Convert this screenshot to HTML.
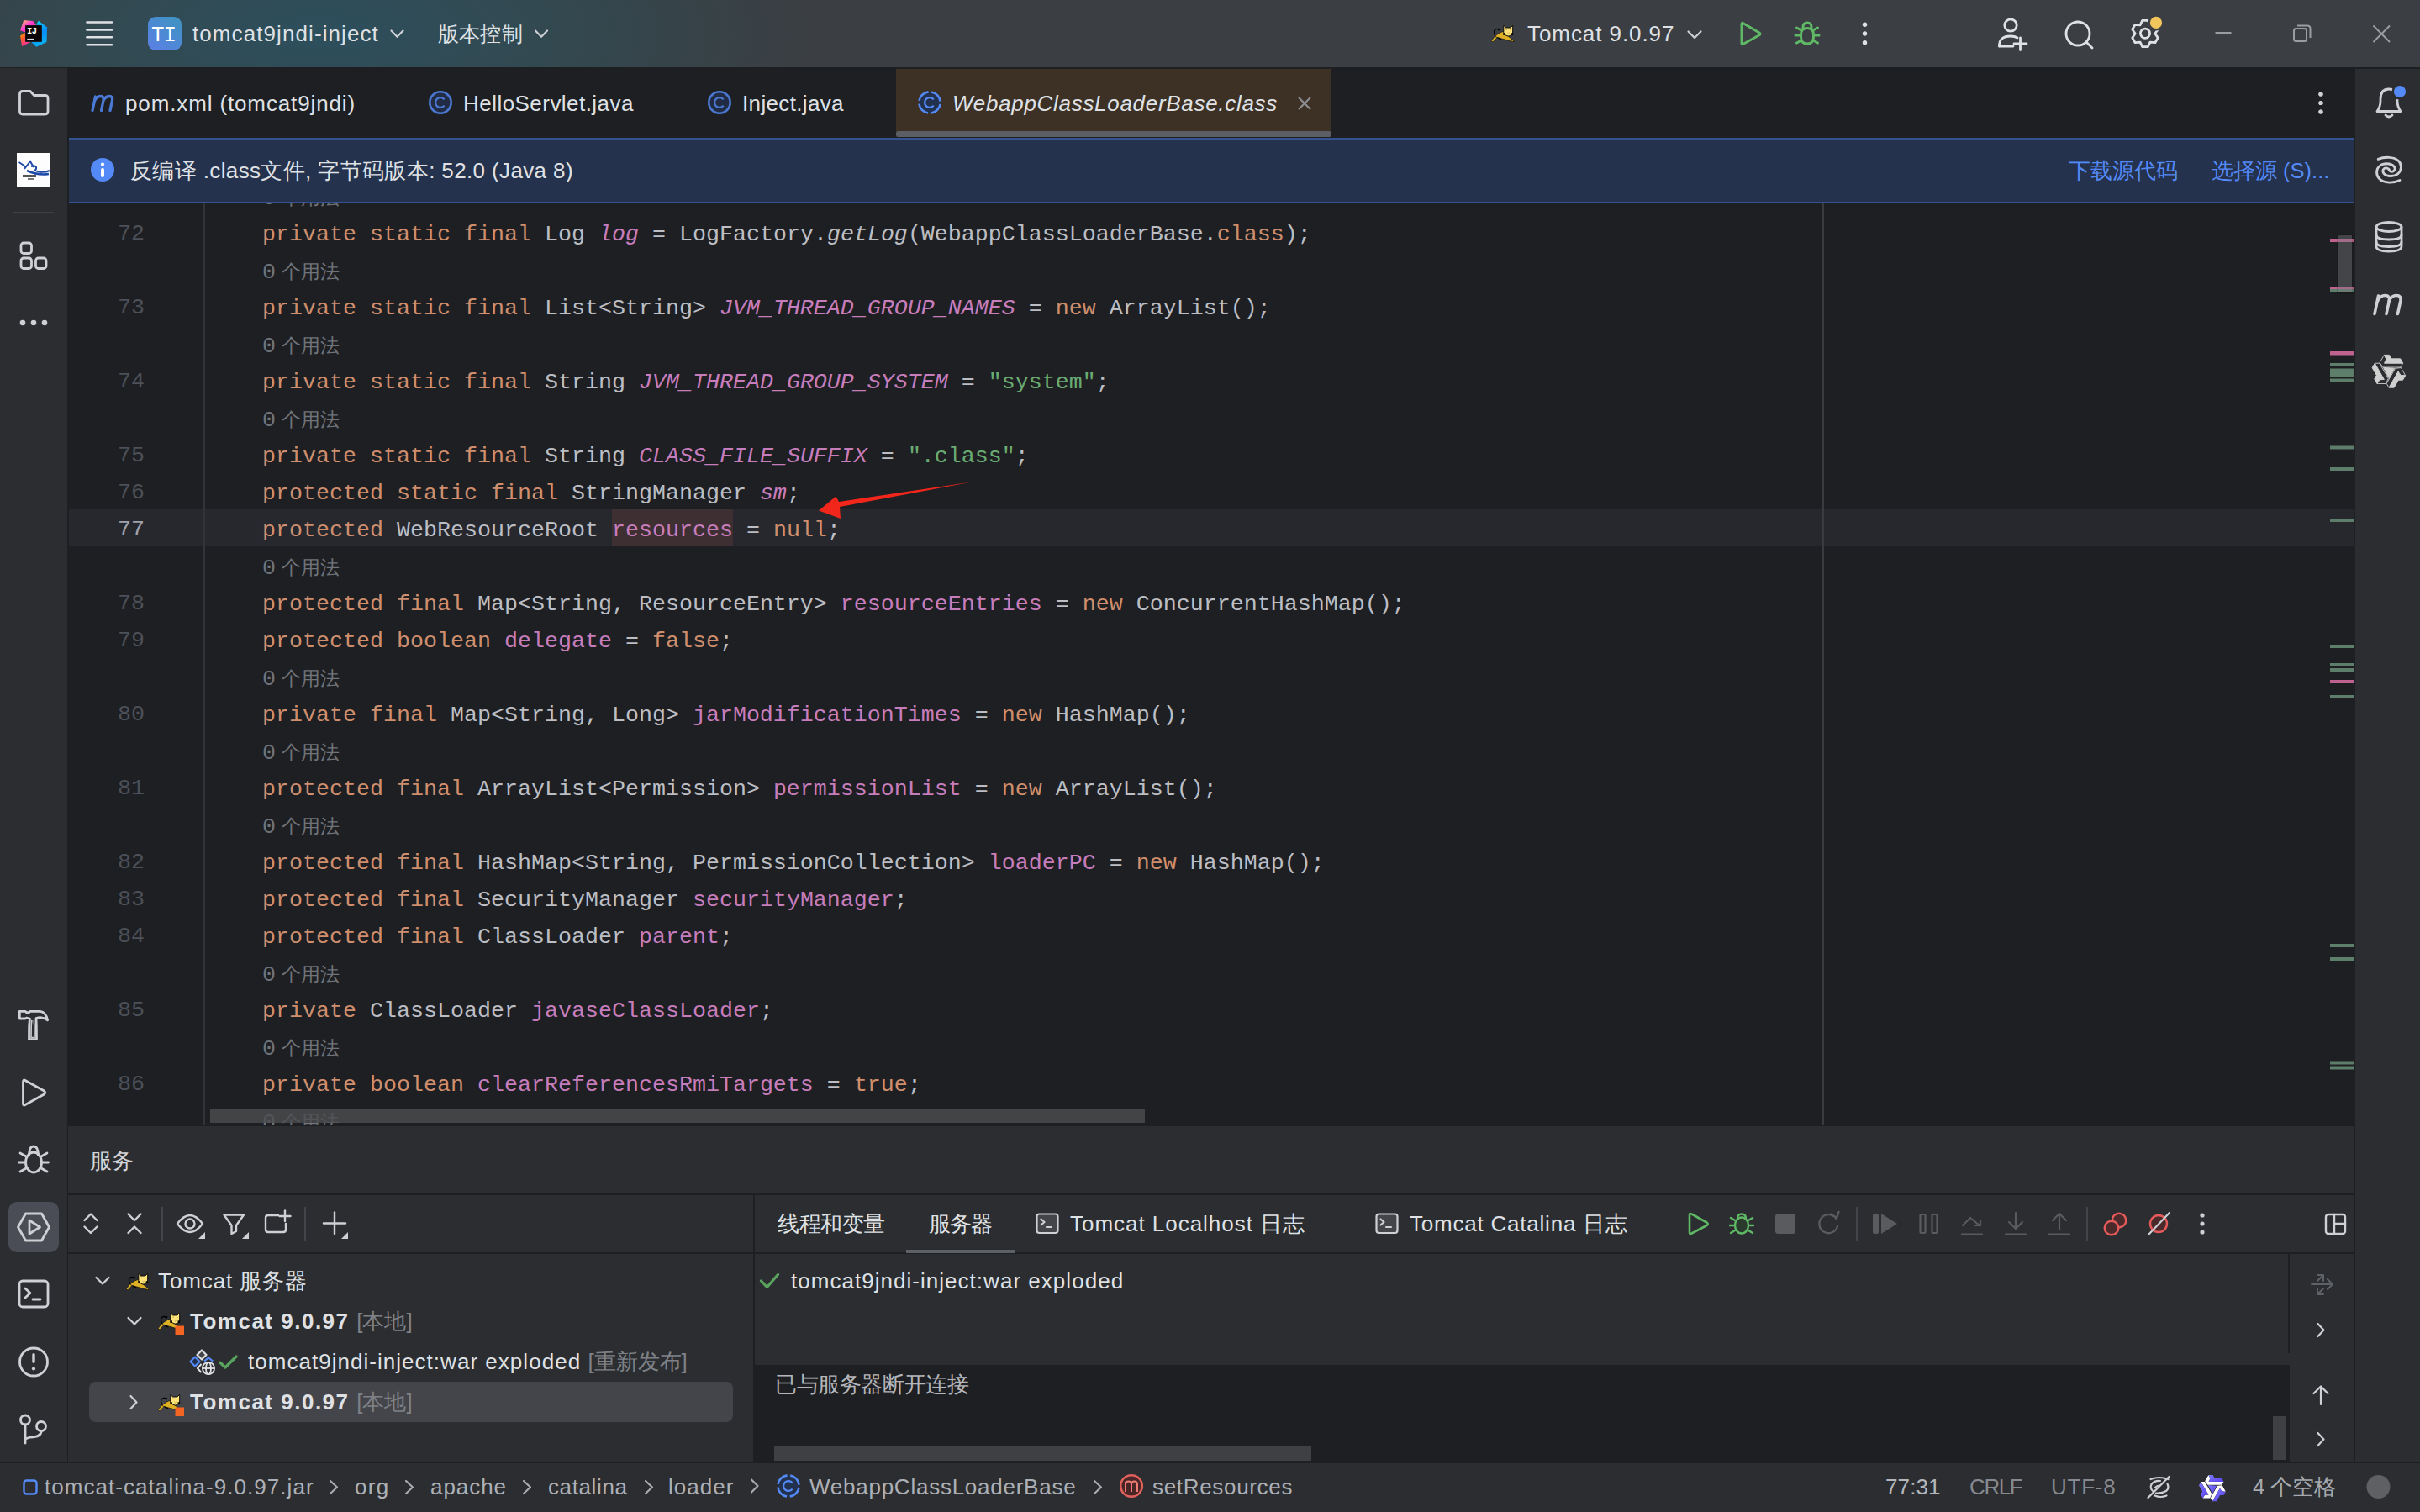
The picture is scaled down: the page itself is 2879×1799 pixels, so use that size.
<!DOCTYPE html>
<html><head><meta charset="utf-8">
<style>
*{box-sizing:border-box;margin:0;padding:0}
html,body{width:2879px;height:1799px;overflow:hidden;background:#1e1f22}
body{position:relative;font-family:"Liberation Sans",sans-serif;color:#dfe1e5}
.a{position:absolute}
.t{position:absolute;white-space:nowrap;font-size:26px;line-height:30px}
svg{position:absolute;overflow:visible}
#title{left:0;top:0;width:2879px;height:80px;background:radial-gradient(ellipse 600px 230px at 380px 40px,#2d4f5d 0%,#33484f 50%,#3b3e42 100%)}
#lstrip{left:0;top:81px;width:80px;height:1659px;background:#2b2d30}
#rstrip{left:2800px;top:82px;width:79px;height:1658px;background:#2b2d30;border-left:2px solid #1e1f22}
#tabbar{left:80px;top:80px;width:2721px;height:84px;background:#1e1f22}
#banner{left:82px;top:164px;width:2718px;height:78px;background:#25324d;border-top:2px solid #35538f;border-bottom:2px solid #35538f}
#editor{left:80px;top:241px;width:2721px;height:1098px;background:#1e1f22;overflow:hidden}
#services{left:80px;top:1338px;width:2721px;height:402px;background:#2b2d30;border-top:2px solid #1e1f22;border-left:1px solid #1e1f22}
#status{left:0;top:1740px;width:2879px;height:59px;background:#2b2d30;border-top:1px solid #1e1f22}
.code{position:absolute;left:232px;margin-top:3px;white-space:pre;font-family:"Liberation Mono",monospace;font-size:26.67px;line-height:44px;height:44px;color:#bcbec4}
.ln{position:absolute;left:0;width:92px;margin-top:2px;text-align:right;font-family:"Liberation Mono",monospace;font-size:26.67px;line-height:44px;color:#4b5059}
.k{color:#cf8e6d}.f{color:#c77dbb}.s{color:#6aab73}.i{font-style:italic}
.inl{position:absolute;left:232px;margin-top:3px;white-space:pre;font-family:"Liberation Mono",monospace;font-size:26.67px;line-height:44px;color:#6f737a}
.inl b{font-weight:normal;font-family:"Liberation Sans",sans-serif;font-size:23px;margin-left:7px}
</style></head><body>

<svg width="0" height="0" style="position:absolute"><defs>
<symbol id="tc" viewBox="0 0 40 34">
 <path d="M10.8,21 C9,17 9,13.5 12,12.6 C13.5,12.1 15,12.6 16.5,13.4" fill="none" stroke="#000" stroke-width="1.3"/>
 <ellipse cx="15.6" cy="13.3" rx="1.9" ry="1.1" fill="#000"/>
 <path d="M11.2,20.2 L6.2,26.6 L8,27.8 L13,22.6 Z" fill="#e2b325" stroke="#111" stroke-width="0.6"/>
 <path d="M10.8,21.2 C14,18 17,16.2 21,15.4 L24.5,20 C27.5,22 30.5,24 33.6,27.6 C28,26.8 22,24.8 17,23.6 C14.5,23 12.5,22.6 10.8,21.2 Z" fill="#ddb025" stroke="#1a1408" stroke-width="0.7"/>
 <path d="M12.6,22.4 L17,25.6 L18.4,24.6 L14.8,22.4 Z" fill="#000"/>
 <path d="M20.8,8.3 L23.6,11 L28.8,11 L31.7,8.3 L31.6,17.2 C31,19.2 28.5,21 26.6,21 C24.6,21 21.6,19.2 20.8,17.2 Z" fill="#fde27a" stroke="#000" stroke-width="0.9"/>
 <rect x="20.3" y="17.3" width="2.6" height="2.6" fill="#000"/><rect x="29.6" y="17.3" width="2.6" height="2.6" fill="#000"/>
 <path d="M23.5,13.5 L25,13 M28,13 L29.5,13.5 M25.5,17 L26.6,18 L27.7,17" fill="none" stroke="#8a7a30" stroke-width="0.6"/>
</symbol>
<symbol id="ty" viewBox="0 0 52 54"><path d="M20.36,8.39 L26.61,8.39 L29.29,12.86 L39.64,12.86 L42.68,18.21 L20.54,18.21 L22.86,13.39 Z"/><path d="M45.62,32.73 L42.50,38.15 L37.29,38.23 L32.12,47.20 L25.96,47.15 L37.03,27.98 L40.04,32.40 Z"/><path d="M11.91,42.45 L8.79,37.03 L11.31,32.48 L6.13,23.51 L9.26,18.20 L20.33,37.38 L14.99,37.78 Z"/><path d="M19.46,23.39 L32.50,24.29 L26.07,35.71 Z"/><g fill="none" stroke-width="0.9" style="stroke:inherit"><path d="M20.36,8.39 L15.00,17.50 L19.11,23.04 L39.82,23.04 L42.68,18.21"/><path d="M45.62,32.73 L40.42,23.54 L33.57,24.33 L23.21,42.27 L25.96,47.15"/><path d="M11.91,42.45 L22.48,42.53 L25.22,36.21 L14.86,18.27 L9.26,18.20"/></g></symbol>
<symbol id="ty2" viewBox="0 0 52 54"><path d="M20.36,8.39 L15.00,17.50 L19.11,23.04 L39.82,23.04 L42.68,18.21 L20.54,18.21 L22.86,13.39 Z" fill="#fff"/><path d="M45.62,32.73 L40.42,23.54 L33.57,24.33 L23.21,42.27 L25.96,47.15 L37.03,27.98 L40.04,32.40 Z" fill="#fff"/><path d="M11.91,42.45 L22.48,42.53 L25.22,36.21 L14.86,18.27 L9.26,18.20 L20.33,37.38 L14.99,37.78 Z" fill="#fff"/><path d="M20.36,8.39 L26.61,8.39 L29.29,12.86 L39.64,12.86 L42.68,18.21 L20.54,18.21 L22.86,13.39 Z"/><path d="M45.62,32.73 L42.50,38.15 L37.29,38.23 L32.12,47.20 L25.96,47.15 L37.03,27.98 L40.04,32.40 Z"/><path d="M11.91,42.45 L8.79,37.03 L11.31,32.48 L6.13,23.51 L9.26,18.20 L20.33,37.38 L14.99,37.78 Z"/><path d="M19.46,23.39 L32.50,24.29 L26.07,35.71 Z"/></symbol></defs></svg>
<div id="title" class="a"></div>

<svg style="left:0;top:0" width="80" height="80" viewBox="0 0 80 80">
 <defs>
  <linearGradient id="ija" x1="0" y1="0" x2="1" y2="1"><stop offset="0" stop-color="#fcd34a"/><stop offset="0.45" stop-color="#ff3ad6"/><stop offset="1" stop-color="#ff2a5a"/></linearGradient>
  <linearGradient id="ijb" x1="0" y1="0" x2="0.6" y2="1"><stop offset="0" stop-color="#ffb000"/><stop offset="0.4" stop-color="#ff5a2a"/><stop offset="1" stop-color="#ff2ab4"/></linearGradient>
  <linearGradient id="ijc" x1="0.3" y1="0" x2="0.6" y2="1"><stop offset="0" stop-color="#08d6f5"/><stop offset="0.5" stop-color="#0a8cf8"/><stop offset="1" stop-color="#07b8f2"/></linearGradient>
 </defs>
 <polygon points="28.2,24 39.2,25 43,29.9 30.2,30.5 30.2,38.4 24.1,36.3" fill="url(#ija)"/>
 <polygon points="24.1,42.4 30.2,39 30.2,49.7 36.9,49.7 26.1,55" fill="url(#ijb)"/>
 <polygon points="45.9,24.7 56.1,32.6 55.5,50 43.3,55.8 36.9,49.7 49.7,49.7 49.7,30.2 42.7,29.6" fill="url(#ijc)"/>
 <rect x="30.2" y="30.2" width="19.5" height="19.5" fill="#0a0608"/>
 <text x="32" y="39.8" font-family="Liberation Mono" font-weight="bold" font-size="10.5" fill="#fff" letter-spacing="-0.6">IJ</text>
 <rect x="32.3" y="45.9" width="7.8" height="1.8" fill="#ddd"/>
</svg>
<svg style="left:0;top:0" width="160" height="80">
 <g stroke="#dfe1e5" stroke-width="2.6" stroke-linecap="round">
 <line x1="103.5" y1="26.5" x2="133" y2="26.5"/><line x1="103.5" y1="35.5" x2="133" y2="35.5"/>
 <line x1="103.5" y1="44.3" x2="133" y2="44.3"/><line x1="103.5" y1="53.2" x2="133" y2="53.2"/></g>
</svg>
<div class="a" style="left:176px;top:20px;width:40px;height:40px;border-radius:9px;background:linear-gradient(35deg,#5d7ee6 0%,#4b8bd2 55%,#3e94bf 100%)"></div>
<div class="t" style="left:180px;top:27px;font-size:26px;color:#fff;font-family:'Liberation Mono',monospace;letter-spacing:-1px">TI</div>
<div class="t" id="projname" style="left:229px;top:25px;letter-spacing:1.09px">tomcat9jndi-inject</div>
<svg style="left:0;top:0" width="700" height="80"><g fill="none" stroke="#ced0d6" stroke-width="2.2" stroke-linecap="round" stroke-linejoin="round">
 <polyline points="465.5,36.5 472.5,43.8 479.5,36.5"/><polyline points="637,36.5 644,43.8 651,36.5"/></g></svg>
<div class="t" style="left:521px;top:25px;font-size:25px;letter-spacing:0.2px">版本控制</div>

<svg style="left:1768px;top:22px" width="40" height="34"><use href="#tc"/></svg>
<div class="t" id="tcname" style="left:1817px;top:25px;letter-spacing:0.93px">Tomcat 9.0.97</div>
<svg style="left:0;top:0" width="2879" height="80"><g fill="none" stroke-linecap="round" stroke-linejoin="round">
 <polyline points="2008.5,37.5 2016,45 2023.5,37.5" stroke="#ced0d6" stroke-width="2.2"/>
 <path d="M2072,28.5 L2072,51.5 Q2072,53.5 2074,52.3 L2093,41.8 Q2095,40.3 2093,39 L2074,27.7 Q2072,26.6 2072,28.5 Z" stroke="#5fb865" stroke-width="3"/>
 <g stroke="#5fb865" stroke-width="3">
  <path d="M2142.5,41 Q2142.5,33.5 2150,33.5 Q2157.5,33.5 2157.5,41 L2157.5,44 Q2157.5,52 2150,52 Q2142.5,52 2142.5,44 Z"/>
  <path d="M2145,33.5 L2145,32 Q2145,27 2150,27 Q2155,27 2155,32 L2155,33.5"/>
  <line x1="2136" y1="42" x2="2142" y2="42"/><line x1="2158" y1="42" x2="2164" y2="42"/>
  <line x1="2137.5" y1="33" x2="2143" y2="36"/><line x1="2162.5" y1="33" x2="2157" y2="36"/>
  <line x1="2137.5" y1="51" x2="2143" y2="48"/><line x1="2162.5" y1="51" x2="2157" y2="48"/>
 </g>
 </g>
 <g fill="#dfe1e5"><circle cx="2218.5" cy="29.3" r="2.7"/><circle cx="2218.5" cy="40" r="2.7"/><circle cx="2218.5" cy="50.7" r="2.7"/></g>
 <g fill="none" stroke="#dfe1e5" stroke-width="2.8" stroke-linecap="round">
  <circle cx="2392" cy="30" r="7.2"/>
  <path d="M2378.5,55 Q2378,43 2392,43 Q2397,43 2400,45"/>
  <line x1="2378.5" y1="55" x2="2395" y2="55"/>
  <line x1="2403.5" y1="45" x2="2403.5" y2="59.5"/><line x1="2396" y1="52" x2="2411" y2="52"/>
  <circle cx="2472" cy="40" r="14"/><line x1="2482" y1="50" x2="2489" y2="57"/>
 </g>
 <g fill="none" stroke="#dfe1e5" stroke-width="2.8" stroke-linejoin="round">
  <path d="M2548.67,24.35 L2555.33,24.35 L2557.90,29.78 L2563.89,29.29 L2567.22,35.06 L2563.80,40.00 L2567.22,44.94 L2563.89,50.71 L2557.90,50.22 L2555.33,55.65 L2548.67,55.65 L2546.10,50.22 L2540.11,50.71 L2536.78,44.94 L2540.20,40.00 L2536.78,35.06 L2540.11,29.29 L2546.10,29.78 Z"/>
  <circle cx="2552" cy="39.8" r="5.6"/>
 </g>
 <circle cx="2565" cy="26.9" r="9.5" fill="#3b3e42"/><circle cx="2565" cy="26.9" r="7.1" fill="#f2c55c"/>
 <g stroke="#9b9da2" stroke-width="2" fill="none">
  <line x1="2635.5" y1="39" x2="2654.5" y2="39"/>
  <rect x="2729" y="34" width="15" height="15" rx="2.5"/>
  <path d="M2733,30.5 L2745,30.5 Q2748.5,30.5 2748.5,34 L2748.5,45"/>
  <line x1="2823.5" y1="30.5" x2="2843" y2="50"/><line x1="2843" y1="30.5" x2="2823.5" y2="50"/>
 </g>
</svg>

<div id="lstrip" class="a"></div>

<svg style="left:0;top:80px" width="80" height="1660" viewBox="0 80 80 1660">
 <g fill="none" stroke="#ced0d6" stroke-width="2.8" stroke-linejoin="round" stroke-linecap="round">
  <path d="M23.5,112 Q23.5,108.5 27,108.5 L36,108.5 L40.5,113.5 L53.5,113.5 Q57,113.5 57,117 L57,132.5 Q57,136 53.5,136 L27,136 Q23.5,136 23.5,132.5 Z"/>
  <rect x="25" y="289" width="12.5" height="12.5" rx="3"/>
  <rect x="25" y="307" width="12.5" height="12.5" rx="3"/>
  <rect x="42.5" y="307" width="12.5" height="12.5" rx="3"/>
  <path d="M23.3,1203.3 L30,1203.3 L31.5,1204.6 L34.5,1204.6 L36,1203.3 L47.7,1203.3 Q54.5,1204 56.6,1213.8 Q50,1208.8 43,1211.6 L43.3,1220 L43.5,1236.6 L34.5,1236.6 L34.7,1220 L35.5,1212 L31.5,1211.2 L30,1212 L23.3,1212 Z"/><path d="M37.8,1214.5 L37.2,1220 L37,1234.5 L41,1234.5 L40.8,1220 L40.3,1214.5" stroke-width="1.6"/>
  <path d="M27.5,1287 L27.5,1313 Q27.5,1316 30,1314.5 L52.5,1302 Q55,1300 52.5,1298 L30,1285.5 Q27.5,1284 27.5,1287 Z"/>
  <ellipse cx="40" cy="1383" rx="9.5" ry="12"/>
  <path d="M34.5,1374.5 Q34.5,1364 40,1364 Q45.5,1364 45.5,1374.5"/>
  <line x1="22.5" y1="1383" x2="30" y2="1383"/><line x1="50" y1="1383" x2="57.5" y2="1383"/>
  <line x1="24" y1="1372" x2="31" y2="1376"/><line x1="56" y1="1372" x2="49" y2="1376"/>
  <line x1="24" y1="1394" x2="31" y2="1390"/><line x1="56" y1="1394" x2="49" y2="1390"/>
 </g>
 <g fill="#ced0d6"><circle cx="27" cy="384" r="3.3"/><circle cx="40" cy="384" r="3.3"/><circle cx="53" cy="384" r="3.3"/></g>
 <rect x="16" y="252" width="48" height="2.2" fill="#3c3f44"/>
 <rect x="20" y="182" width="40" height="40" fill="#fdfdfd"/>
 <g fill="none" stroke="#1f4aa8" stroke-width="2">
  <path d="M22.5,193 Q26,195 31,199"/><path d="M29,201 L36,192 L40,199"/>
  <path d="M37,198 Q44,196 43,201 Q40,203 45,204 Q52,206 59,203"/>
  <path d="M32,203 Q45,209 58,207" stroke-width="2.6"/>
 </g>
 <rect x="27" y="208" width="16" height="3" fill="#555"/><rect x="33" y="212" width="8" height="2" fill="#777"/>
 <rect x="10" y="1430" width="60" height="60" rx="10" fill="#4a4d55"/>
 <g fill="none" stroke="#ced0d6" stroke-width="2.8" stroke-linejoin="round" stroke-linecap="round">
  <path d="M30.5,1444 L49.5,1444 L58.5,1460 L49.5,1476 L30.5,1476 L21.5,1460 Z"/>
  <path d="M35,1452 L35,1468 L47.5,1460 Z"/>
  <rect x="23" y="1524" width="34" height="31" rx="4"/>
  <polyline points="30,1533 36,1538.5 30,1544"/><line x1="39" y1="1546" x2="48" y2="1546"/>
  <circle cx="40" cy="1620.5" r="16.5"/>
  <circle cx="30" cy="1689.5" r="5.5"/><circle cx="49" cy="1697" r="5.5"/>
  <path d="M30,1695 L30,1717"/><path d="M49,1702.5 Q49,1710 36,1710 L30,1712"/>
 </g>
 <rect x="38.3" y="1610" width="3.4" height="12" rx="1.7" fill="#ced0d6"/><circle cx="40" cy="1628.5" r="2.1" fill="#ced0d6"/>
</svg>

<div id="tabbar" class="a"></div>

<svg style="left:0;top:80px" width="160" height="84" viewBox="0 80 160 84"><path d="M110,131.5 L113.5,115 M112.5,120 Q115,114.5 119.5,114.5 Q124,114.5 123,119.5 L120.5,131.5 M122.8,120 Q125.5,114.5 130,114.5 Q134.5,114.5 133.5,119.5 L131,131.5" fill="none" stroke="#4b7ad6" stroke-width="3.3" stroke-linecap="round" stroke-linejoin="round"/></svg>
<div class="t" style="left:149px;top:108px;letter-spacing:0.87px">pom.xml (tomcat9jndi)</div>
<svg style="left:0;top:0" width="1200" height="164"><circle cx="524" cy="122" r="12.7" fill="#222b44" stroke="#4a78d0" stroke-width="2.6"/><path d="M528.65,118.37 A5.9,5.9 0 1 0 528.65,125.63" fill="none" stroke="#4a78d0" stroke-width="2.3"/><circle cx="856" cy="122" r="12.7" fill="#222b44" stroke="#4a78d0" stroke-width="2.6"/><path d="M860.65,118.37 A5.9,5.9 0 1 0 860.65,125.63" fill="none" stroke="#4a78d0" stroke-width="2.3"/></svg>
<div class="t" style="left:551px;top:108px;letter-spacing:0.46px">HelloServlet.java</div>
<div class="t" style="left:883px;top:108px;letter-spacing:0.35px">Inject.java</div>
<div class="a" style="left:1066px;top:82px;width:518px;height:81px;background:#3d3024"></div>
<div class="a" style="left:1066px;top:156px;width:518px;height:7px;background:#5b5e64;border-radius:3px"></div>
<svg style="left:0;top:80px" width="1600" height="84"><g transform="translate(0,-80)"><circle cx="1106" cy="122" r="12.7" fill="#22324e" stroke="#548af7" stroke-width="2.6" stroke-dasharray="16.15 3.8" stroke-dashoffset="-1.9"/><path d="M1110.65,118.37 A5.9,5.9 0 1 0 1110.65,125.63" fill="none" stroke="#548af7" stroke-width="2.3"/></g>
<g stroke="#8c8e93" stroke-width="2.2"><line x1="1545" y1="36" x2="1559" y2="50"/><line x1="1559" y1="36" x2="1545" y2="50"/></g>
<g fill="#ced0d6"><circle cx="2761" cy="32" r="2.6"/><circle cx="2761" cy="42.5" r="2.6"/><circle cx="2761" cy="53" r="2.6"/></g>
</svg>
<svg style="left:0;top:80px" width="2879" height="84"><g fill="#ced0d6"><circle cx="2761" cy="32" r="2.6"/><circle cx="2761" cy="42.5" r="2.6"/><circle cx="2761" cy="53" r="2.6"/></g></svg>
<div class="t i" style="left:1133px;top:108px;letter-spacing:0.7px">WebappClassLoaderBase.class</div>

<div id="editor" class="a">
<div class="a" style="left:2px;top:365px;width:2719px;height:44px;background:#26282e"></div>
<div class="a" style="left:162px;top:0;width:2px;height:1098px;background:#303337"></div>
<div class="a" style="left:2088px;top:0;width:2px;height:1098px;background:#393b3f"></div>
<div class="a" style="left:648px;top:365px;width:144px;height:44px;background:#3e2f32"></div>
<div class="inl" style="top:-31px">0<b>个用法</b></div>
<div class="ln" style="top:13px"><span>72</span></div>
<div class="code" style="top:13px"><span class="k">private static final </span>Log <span class="f i">log</span> = LogFactory.<span class="i">getLog</span>(WebappClassLoaderBase.<span class="k">class</span>);</div>
<div class="inl" style="top:57px">0<b>个用法</b></div>
<div class="ln" style="top:101px"><span>73</span></div>
<div class="code" style="top:101px"><span class="k">private static final </span>List&lt;String&gt; <span class="f i">JVM_THREAD_GROUP_NAMES</span> = <span class="k">new </span>ArrayList();</div>
<div class="inl" style="top:145px">0<b>个用法</b></div>
<div class="ln" style="top:189px"><span>74</span></div>
<div class="code" style="top:189px"><span class="k">private static final </span>String <span class="f i">JVM_THREAD_GROUP_SYSTEM</span> = <span class="s">"system"</span>;</div>
<div class="inl" style="top:233px">0<b>个用法</b></div>
<div class="ln" style="top:277px"><span>75</span></div>
<div class="code" style="top:277px"><span class="k">private static final </span>String <span class="f i">CLASS_FILE_SUFFIX</span> = <span class="s">".class"</span>;</div>
<div class="ln" style="top:321px"><span>76</span></div>
<div class="code" style="top:321px"><span class="k">protected static final </span>StringManager <span class="f i">sm</span>;</div>
<div class="ln" style="top:365px"><span style="color:#a1a3ab">77</span></div>
<div class="code" style="top:365px"><span class="k">protected </span>WebResourceRoot <span class="f hl">resources</span> = <span class="k">null</span>;</div>
<div class="inl" style="top:409px">0<b>个用法</b></div>
<div class="ln" style="top:453px"><span>78</span></div>
<div class="code" style="top:453px"><span class="k">protected final </span>Map&lt;String, ResourceEntry&gt; <span class="f">resourceEntries</span> = <span class="k">new </span>ConcurrentHashMap();</div>
<div class="ln" style="top:497px"><span>79</span></div>
<div class="code" style="top:497px"><span class="k">protected boolean </span><span class="f">delegate</span> = <span class="k">false</span>;</div>
<div class="inl" style="top:541px">0<b>个用法</b></div>
<div class="ln" style="top:585px"><span>80</span></div>
<div class="code" style="top:585px"><span class="k">private final </span>Map&lt;String, Long&gt; <span class="f">jarModificationTimes</span> = <span class="k">new </span>HashMap();</div>
<div class="inl" style="top:629px">0<b>个用法</b></div>
<div class="ln" style="top:673px"><span>81</span></div>
<div class="code" style="top:673px"><span class="k">protected final </span>ArrayList&lt;Permission&gt; <span class="f">permissionList</span> = <span class="k">new </span>ArrayList();</div>
<div class="inl" style="top:717px">0<b>个用法</b></div>
<div class="ln" style="top:761px"><span>82</span></div>
<div class="code" style="top:761px"><span class="k">protected final </span>HashMap&lt;String, PermissionCollection&gt; <span class="f">loaderPC</span> = <span class="k">new </span>HashMap();</div>
<div class="ln" style="top:805px"><span>83</span></div>
<div class="code" style="top:805px"><span class="k">protected final </span>SecurityManager <span class="f">securityManager</span>;</div>
<div class="ln" style="top:849px"><span>84</span></div>
<div class="code" style="top:849px"><span class="k">protected final </span>ClassLoader <span class="f">parent</span>;</div>
<div class="inl" style="top:893px">0<b>个用法</b></div>
<div class="ln" style="top:937px"><span>85</span></div>
<div class="code" style="top:937px"><span class="k">private </span>ClassLoader <span class="f">javaseClassLoader</span>;</div>
<div class="inl" style="top:981px">0<b>个用法</b></div>
<div class="ln" style="top:1025px"><span>86</span></div>
<div class="code" style="top:1025px"><span class="k">private boolean </span><span class="f">clearReferencesRmiTargets</span> = <span class="k">true</span>;</div>
<div class="inl" style="top:1069px">0<b>个用法</b></div>
</div>
<svg style="left:0;top:0" width="2879" height="1799">
<rect x="2772" y="284" width="28" height="4" fill="#c0628f"/>
<rect x="2772" y="342" width="28" height="2.2" fill="#c0628f"/>
<rect x="2772" y="344" width="28" height="4" fill="#5e7e6c"/>
<rect x="2772" y="418" width="28" height="4.5" fill="#c0628f"/>
<rect x="2772" y="432" width="28" height="4" fill="#5e7e6c"/>
<rect x="2772" y="438.5" width="28" height="9.5" fill="#5e7e6c"/>
<rect x="2772" y="450.5" width="28" height="4" fill="#5e7e6c"/>
<rect x="2772" y="530.5" width="28" height="4" fill="#5e7e6c"/>
<rect x="2772" y="556" width="28" height="4" fill="#5e7e6c"/>
<rect x="2772" y="617" width="28" height="4" fill="#5e7e6c"/>
<rect x="2772" y="767" width="28" height="4" fill="#5e7e6c"/>
<rect x="2772" y="789" width="28" height="4" fill="#5e7e6c"/>
<rect x="2772" y="795" width="28" height="4" fill="#5e7e6c"/>
<rect x="2772" y="809" width="28" height="4" fill="#c0628f"/>
<rect x="2772" y="827" width="28" height="4" fill="#5e7e6c"/>
<rect x="2772" y="1123" width="28" height="4" fill="#5e7e6c"/>
<rect x="2772" y="1139" width="28" height="4" fill="#5e7e6c"/>
<rect x="2772" y="1262.5" width="28" height="4" fill="#5e7e6c"/>
<rect x="2772" y="1268.5" width="28" height="4" fill="#5e7e6c"/>
<rect x="2780" y="278" width="20" height="72" fill="#000" fill-opacity="0.12"/><rect x="2782" y="280" width="16" height="68" fill="#9a9ca0" fill-opacity="0.33"/>
<rect x="250" y="1320" width="1112" height="16" fill="#4c4d50" fill-opacity="0.8"/>
<path d="M1156,573.5 L998,597 L994.5,590.5 L974,607.5 L1000,617 L999,603 Z" fill="#f2261b"/>
</svg>
<div id="banner" class="a"></div>

<svg style="left:0;top:164px" width="200" height="77"><circle cx="122" cy="38" r="14" fill="#548af7"/>
<circle cx="122" cy="31.5" r="2.1" fill="#fff"/><rect x="120" y="36" width="4" height="11" rx="2" fill="#fff"/></svg>
<div class="t" id="bantext" style="left:155px;top:188px;font-size:26px;letter-spacing:0.37px">反编译 .class文件, 字节码版本: 52.0 (Java 8)</div>
<div class="t" style="left:2461px;top:188px;font-size:25.5px;color:#548af7">下载源代码</div>
<div class="t" style="left:2631px;top:188px;font-size:25.5px;color:#548af7">选择源 (S)...</div>

<div id="rstrip" class="a"></div>

<svg style="left:2801px;top:80px" width="78" height="420" viewBox="2801 80 78 420">
 <g fill="none" stroke="#ced0d6" stroke-width="2.8" stroke-linejoin="round" stroke-linecap="round">
  <path d="M2828,132.5 L2856,132.5 Q2852,127 2852,120 L2852,118 Q2852,106 2842,106 Q2832,106 2832,118 L2832,120 Q2832,127 2828,132.5 Z"/>
  <path d="M2838,137 Q2842,141 2846,137"/>
  <path d="M2829.2,189.4 C2836,186.5 2848,186 2853.5,191.5 C2857.5,195.5 2857.5,202.5 2853,206.5 C2849,210 2840,211 2836,206.5 C2833.5,203.5 2835.5,199.5 2839,199.8 C2840.5,200 2841.5,200.8 2842.2,201.5"/><path d="M2855,214.5 C2848,218 2836,218.5 2830.5,212.5 C2826.5,208.5 2826.5,201 2831,197.5 C2835,194 2844,193.5 2848,198 C2850.5,200.5 2848.5,204.5 2845,204.3 C2843.5,204.2 2842.7,203.2 2842.2,202.4"/>
  <ellipse cx="2842" cy="270" rx="15" ry="5.5"/>
  <path d="M2827,270 L2827,293 Q2827,299 2842,299 Q2857,299 2857,293 L2857,270"/>
  <path d="M2827,279.5 Q2827,285 2842,285 Q2857,285 2857,279.5"/>
  <path d="M2827,288 Q2827,293.5 2842,293.5 Q2857,293.5 2857,288"/>
 </g>
 <circle cx="2855" cy="109" r="9.6" fill="#2b2d30"/><circle cx="2855" cy="109" r="7.1" fill="#548af7"/>
 <path d="M2825,373.5 L2829.5,352 M2828.3,358.5 Q2831.5,351.5 2837.5,351.5 Q2843.5,351.5 2842.3,358 L2839,373.5 M2841.8,358.5 Q2845,351.5 2851,351.5 Q2857,351.5 2855.8,358 L2852.5,373.5" fill="none" stroke="#ced0d6" stroke-width="3.6" stroke-linecap="round" stroke-linejoin="round"/>
 <svg x="2816" y="414" width="52" height="54" fill="#cfcfcf" stroke="#cfcfcf"><use href="#ty"/></svg>
</svg>

<div id="services" class="a"></div>

<div class="t" style="left:107px;top:1366px;font-size:26px;color:#d2d4d8">服务</div>
<div class="a" style="left:81px;top:1420px;width:2720px;height:2px;background:#1e1f22"></div>
<div class="a" style="left:81px;top:1490px;width:816px;height:2px;background:#1e1f22"></div>
<div class="a" style="left:897px;top:1490px;width:1904px;height:2px;background:#1e1f22"></div>
<div class="a" style="left:896px;top:1421px;width:2px;height:319px;background:#1e1f22"></div>
<svg style="left:0;top:1420px" width="900" height="70" viewBox="0 1420 900 70">
 <g fill="none" stroke="#ced0d6" stroke-width="2.4" stroke-linecap="round" stroke-linejoin="round">
  <polyline points="100.5,1452 108,1444.5 115.5,1452"/><polyline points="100.5,1459.5 108,1467 115.5,1459.5"/>
  <polyline points="152.5,1444.5 160,1452 167.5,1444.5"/><polyline points="152.5,1467 160,1459.5 167.5,1467"/>
  <path d="M211,1456 Q226,1436 241,1456 Q226,1476 211,1456 Z"/><circle cx="226" cy="1456" r="5.5"/>
  <path d="M266.5,1445.5 L290,1445.5 L281,1458 L281,1465 L275.5,1468 L275.5,1458 Z"/>
  <path d="M331,1446 L319,1446 Q316,1446 316,1449 L316,1463 Q316,1466 319,1466 L337,1466 Q340,1466 340,1463 L340,1456"/>
  <line x1="339" y1="1440.5" x2="339" y2="1453"/><line x1="332.5" y1="1447" x2="345.5" y2="1447"/>
  <line x1="398" y1="1442.5" x2="398" y2="1468"/><line x1="385" y1="1455.5" x2="411" y2="1455.5"/>
 </g>
 <g fill="#ced0d6"><path d="M244,1466 L244,1474 L236,1474 Z"/><path d="M296,1466 L296,1474 L288,1474 Z"/><path d="M414,1466 L414,1474 L406,1474 Z"/></g>
 <rect x="192" y="1436" width="2" height="40" fill="#43454a"/><rect x="362" y="1436" width="2" height="40" fill="#43454a"/>
</svg>
<!-- tree -->
<div class="a" style="left:106px;top:1644px;width:766px;height:48px;border-radius:8px;background:#43454a"></div>
<svg style="left:0;top:1490px" width="900" height="250" viewBox="0 1490 900 250">
 <g fill="none" stroke="#ced0d6" stroke-width="2.2" stroke-linecap="round" stroke-linejoin="round">
  <polyline points="114.5,1520 122,1527.5 129.5,1520"/>
  <polyline points="152.5,1568 160,1575.5 167.5,1568"/>
  <polyline points="155.5,1661 162.5,1668.5 155.5,1676"/>
 </g>
 <path d="M240,1606.5 L245.5,1612 L240,1617.5 L234.5,1612 Z" fill="#43454a" stroke="#dfe1e5" stroke-width="2.2" stroke-linejoin="round"/>
 <path d="M232,1614.5 L237.5,1620 L232,1625.5 L226.5,1620 Z" fill="#1f2f4d" stroke="#548af7" stroke-width="2.2" stroke-linejoin="round"/>
 <polyline points="243,1619.5 248,1615.3 253.3,1619.5" fill="none" stroke="#548af7" stroke-width="2.2" stroke-linejoin="round"/>
 <polyline points="239.5,1622.8 235,1628 239.5,1633.2" fill="none" stroke="#dfe1e5" stroke-width="2"/>
 <g fill="none" stroke="#dfe1e5" stroke-width="1.8"><circle cx="248" cy="1628" r="7.1"/><ellipse cx="248" cy="1628" rx="3" ry="7.1"/><line x1="241" y1="1628" x2="255" y2="1628"/></g>
 <polyline points="262,1621.2 268,1627 281,1614" fill="none" stroke="#59a35f" stroke-width="3.3" stroke-linecap="round" stroke-linejoin="round"/>
</svg>
<svg style="left:144px;top:1507px" width="40" height="34"><use href="#tc"/></svg>
<svg style="left:181.5px;top:1554px" width="40" height="34"><use href="#tc"/><rect x="26.5" y="23.5" width="10.5" height="10.5" fill="#f26522"/></svg>
<svg style="left:181.5px;top:1651px" width="40" height="34"><use href="#tc"/><rect x="26.5" y="23.5" width="10.5" height="10.5" fill="#f26522"/></svg>
<div class="t" style="left:188px;top:1509px;letter-spacing:0.89px">Tomcat 服务器</div>
<div class="t" style="left:226px;top:1557px;font-weight:bold;letter-spacing:1.5px">Tomcat 9.0.97 <span style="font-weight:normal;color:#7e8187;letter-spacing:0">[本地]</span></div>
<div class="t" style="left:295px;top:1605px;letter-spacing:1.03px">tomcat9jndi-inject:war exploded <span style="color:#7e8187;letter-spacing:0">[重新发布]</span></div>
<div class="t" style="left:226px;top:1653px;font-weight:bold;letter-spacing:1.5px">Tomcat 9.0.97 <span style="font-weight:normal;color:#7e8187;letter-spacing:0">[本地]</span></div>
<!-- details tabs -->
<div class="t" style="left:925px;top:1441px;letter-spacing:-0.4px">线程和变量</div>
<div class="t" style="left:1105px;top:1441px;letter-spacing:-1.2px">服务器</div>
<div class="a" style="left:1078px;top:1487px;width:130px;height:4px;background:#5e6166"></div>
<svg style="left:1200px;top:1420px" width="1620" height="70" viewBox="1200 1420 1620 70">
 <g fill="none" stroke="#ced0d6" stroke-width="2.2" stroke-linecap="round" stroke-linejoin="round">
  <rect x="1233.5" y="1444.5" width="25" height="22.5" rx="3" fill="#43454a"/><polyline points="1238.5,1450.5 1242.5,1454 1238.5,1457.5"/><line x1="1245" y1="1460" x2="1251" y2="1460"/>
  <rect x="1637.5" y="1444.5" width="25" height="22.5" rx="3" fill="#43454a"/><polyline points="1642.5,1450.5 1646.5,1454 1642.5,1457.5"/><line x1="1649" y1="1460" x2="1655" y2="1460"/>
 </g>
 <g fill="none" stroke-linecap="round" stroke-linejoin="round">
  <path d="M2010,1445.5 L2010,1466.5 Q2010,1469 2012.5,1467.5 L2030.5,1458 Q2033,1456 2030.5,1454.5 L2012.5,1444.5 Q2010,1443 2010,1445.5 Z" stroke="#5fb865" stroke-width="2.6"/>
  <g stroke="#5fb865" stroke-width="2.4" fill="#2a3a2c">
   <ellipse cx="2072" cy="1458" rx="8" ry="9.5"/>
   <path d="M2067,1450 Q2067,1444.5 2072,1444.5 Q2077,1444.5 2077,1450" fill="none"/>
   <line x1="2058" y1="1458" x2="2063" y2="1458"/><line x1="2081" y1="1458" x2="2086" y2="1458"/>
   <line x1="2059" y1="1449" x2="2064" y2="1452"/><line x1="2085" y1="1449" x2="2080" y2="1452"/>
   <line x1="2059" y1="1467" x2="2064" y2="1464"/><line x1="2085" y1="1467" x2="2080" y2="1464"/>
  </g>
  <rect x="2112" y="1444" width="24" height="24" rx="3.5" fill="#5a5b5e"/>
  <path d="M2184.5,1450 A11,11 0 1 0 2186,1459" stroke="#5a5b5e" stroke-width="2.4"/><polyline points="2178,1444.5 2185,1449 2187.5,1442" stroke="#5a5b5e" stroke-width="2.4"/>
  <rect x="2228" y="1444" width="7" height="24" rx="2" fill="#5a5b5e"/><path d="M2238,1444 L2257,1456 L2238,1468 Z" fill="#5a5b5e"/>
  <rect x="2284.5" y="1445" width="6" height="22" rx="1" stroke="#5a5b5e" stroke-width="2.2"/><rect x="2298.5" y="1445" width="6" height="22" rx="1" stroke="#5a5b5e" stroke-width="2.2"/>
  <g stroke="#5a5b5e" stroke-width="2.2">
   <path d="M2335,1458 L2344,1449 L2355,1458"/><polyline points="2350,1458 2356,1458 2356,1452"/><line x1="2334" y1="1468.5" x2="2358" y2="1468.5"/>
   <line x1="2398" y1="1443" x2="2398" y2="1461"/><polyline points="2390,1454 2398,1462 2406,1454"/><line x1="2386" y1="1468.5" x2="2410" y2="1468.5"/>
   <line x1="2450" y1="1445" x2="2450" y2="1463"/><polyline points="2442,1452 2450,1444 2458,1452"/><line x1="2438" y1="1468.5" x2="2462" y2="1468.5"/>
  </g>
  <g stroke="#e55b5b" stroke-width="2.4" fill="#4a2a2b"><circle cx="2521" cy="1452" r="8.3"/><circle cx="2512" cy="1461" r="8.3"/></g>
  <g stroke="#e55b5b" stroke-width="2.4" fill="#4a2a2b"><circle cx="2568" cy="1456" r="10"/></g>
  <line x1="2556" y1="1469" x2="2581" y2="1443" stroke="#ced0d6" stroke-width="2.2"/>
  <rect x="2767" y="1445" width="23" height="23" rx="3" stroke="#ced0d6" stroke-width="2.4"/><line x1="2777" y1="1445" x2="2777" y2="1468" stroke="#ced0d6" stroke-width="2.4"/><line x1="2777" y1="1456" x2="2790" y2="1456" stroke="#ced0d6" stroke-width="2.4"/>
 </g>
 <g fill="#ced0d6"><circle cx="2620" cy="1446" r="2.6"/><circle cx="2620" cy="1456" r="2.6"/><circle cx="2620" cy="1466" r="2.6"/></g>
 <rect x="2208" y="1436" width="2" height="40" fill="#43454a"/><rect x="2482" y="1436" width="2" height="40" fill="#43454a"/>
</svg>
<div class="t" style="left:1273px;top:1441px;letter-spacing:0.97px">Tomcat Localhost 日志</div>
<div class="t" style="left:1677px;top:1441px;letter-spacing:0.78px">Tomcat Catalina 日志</div>
<!-- details content -->
<div class="a" style="left:898px;top:1624px;width:1826px;height:116px;background:#1e1f22"></div>
<div class="a" style="left:2722px;top:1491px;width:2px;height:119px;background:#1e1f22"></div>
<svg style="left:0;top:1490px" width="2879" height="250" viewBox="0 1490 2879 250">
 <polyline points="905.5,1524 912.5,1531.5 925.5,1516.5" fill="none" stroke="#59a35f" stroke-width="3.2" stroke-linecap="round" stroke-linejoin="round"/>
 <g fill="none" stroke="#5e6166" stroke-width="2" stroke-linecap="round" stroke-linejoin="round">
  <line x1="2750" y1="1528" x2="2775" y2="1528"/><polyline points="2769,1522 2775,1528 2769,1534"/>
  <path d="M2757,1524 L2764,1517 M2757,1517 L2764,1517 L2764,1524"/>
  <path d="M2757,1540 L2764,1533 M2757,1533 L2757,1540 L2764,1540"/>
 </g>
 <g fill="none" stroke="#ced0d6" stroke-width="2.2" stroke-linecap="round" stroke-linejoin="round">
  <polyline points="2757.5,1575 2764.5,1582.5 2757.5,1590"/>
  <line x1="2761" y1="1650" x2="2761" y2="1671"/><polyline points="2752.5,1658 2761,1649.5 2769.5,1658"/>
  <polyline points="2757.5,1705 2764.5,1712.5 2757.5,1720"/>
 </g>
 <rect x="921" y="1721" width="639" height="17" fill="#3f4043"/>
 <rect x="2704" y="1685" width="16" height="52" fill="#3f4043"/>
</svg>
<div class="t" style="left:941px;top:1509px;letter-spacing:1.03px">tomcat9jndi-inject:war exploded</div>
<div class="t" style="left:922px;top:1632px;letter-spacing:-0.38px;color:#b4b6bb">已与服务器断开连接</div>

<div id="status" class="a"></div>

<svg style="left:0;top:1740px" width="2879" height="59" viewBox="0 1740 2879 59">
 <rect x="28.5" y="1761.5" width="15" height="16" rx="3" fill="none" stroke="#548af7" stroke-width="2.4"/>
 <g fill="none" stroke="#a8abb0" stroke-width="2.2" stroke-linecap="round" stroke-linejoin="round">
  <polyline points="393,1762 401,1769.5 393,1777"/><polyline points="483,1762 491,1769.5 483,1777"/>
  <polyline points="623,1762 631,1769.5 623,1777"/><polyline points="768,1762 776,1769.5 768,1777"/>
  <polyline points="894,1760.5 901.5,1768 894,1775.5"/><polyline points="1302,1762 1310,1769.5 1302,1777"/>
 </g>
 <circle cx="938" cy="1768" r="12.7" fill="#22324e" stroke="#548af7" stroke-width="2.6" stroke-dasharray="16.15 3.8" stroke-dashoffset="-1.9"/><path d="M942.65,1764.37 A5.9,5.9 0 1 0 942.65,1771.63" fill="none" stroke="#548af7" stroke-width="2.3"/>
 <circle cx="1346" cy="1768" r="12.8" fill="#4a2527" stroke="#e0605b" stroke-width="2.6"/>
 <path d="M1339,1775 L1339,1763 M1339,1766 Q1339,1762.5 1342.5,1762.5 Q1346,1762.5 1346,1766 L1346,1775 M1346,1766 Q1346,1762.5 1349.5,1762.5 Q1353,1762.5 1353,1766 L1353,1775" fill="none" stroke="#ef7d74" stroke-width="2"/>
 <g fill="none" stroke="#ced0d6" stroke-width="2.2" stroke-linecap="round">
  <path d="M2558.5,1760 Q2569,1756 2579.5,1760"/><path d="M2563.5,1779.5 Q2570.5,1782.5 2577.5,1779.5"/><path d="M2578.5,1765.5 Q2581,1771 2577,1774 Q2572,1777 2565,1776.5 M2562,1775 Q2557,1771 2559.5,1766 Q2563,1761.5 2570,1762"/><path d="M2564,1770 Q2566,1767.5 2569,1767.5"/><line x1="2555.5" y1="1782" x2="2580.5" y2="1757"/>
 </g>
 <defs><linearGradient id="pg" x1="0" y1="0" x2="1" y2="1"><stop offset="0" stop-color="#7d7cf8"/><stop offset="1" stop-color="#5a3ff0"/></linearGradient></defs><svg x="2611" y="1748" width="42" height="44" viewBox="0 0 52 54" fill="url(#pg)"><use href="#ty2"/></svg>
 <circle cx="2829.5" cy="1769" r="14" fill="#5e6063"/>
</svg>
<div class="t" style="left:53px;top:1754px;color:#adb0b6;letter-spacing:1.05px">tomcat-catalina-9.0.97.jar</div>
<div class="t" style="left:422px;top:1754px;color:#adb0b6;letter-spacing:1.31px">org</div>
<div class="t" style="left:512px;top:1754px;color:#adb0b6;letter-spacing:0.94px">apache</div>
<div class="t" style="left:652px;top:1754px;color:#adb0b6;letter-spacing:0.62px">catalina</div>
<div class="t" style="left:795px;top:1754px;color:#adb0b6;letter-spacing:1.02px">loader</div>
<div class="t" style="left:963px;top:1754px;color:#adb0b6;letter-spacing:0.75px">WebappClassLoaderBase</div>
<div class="t" style="left:1371px;top:1754px;color:#adb0b6;letter-spacing:0.68px">setResources</div>
<div class="t" style="left:2243px;top:1754px;color:#b4b7bc;letter-spacing:0.13px">77:31</div>
<div class="t" style="left:2343px;top:1754px;color:#868a90;letter-spacing:-1.4px">CRLF</div>
<div class="t" style="left:2440px;top:1754px;color:#868a90;letter-spacing:0.76px">UTF-8</div>
<div class="t" style="left:2680px;top:1754px;color:#a6a9ae;letter-spacing:-0.12px">4 个空格</div>


</body></html>
